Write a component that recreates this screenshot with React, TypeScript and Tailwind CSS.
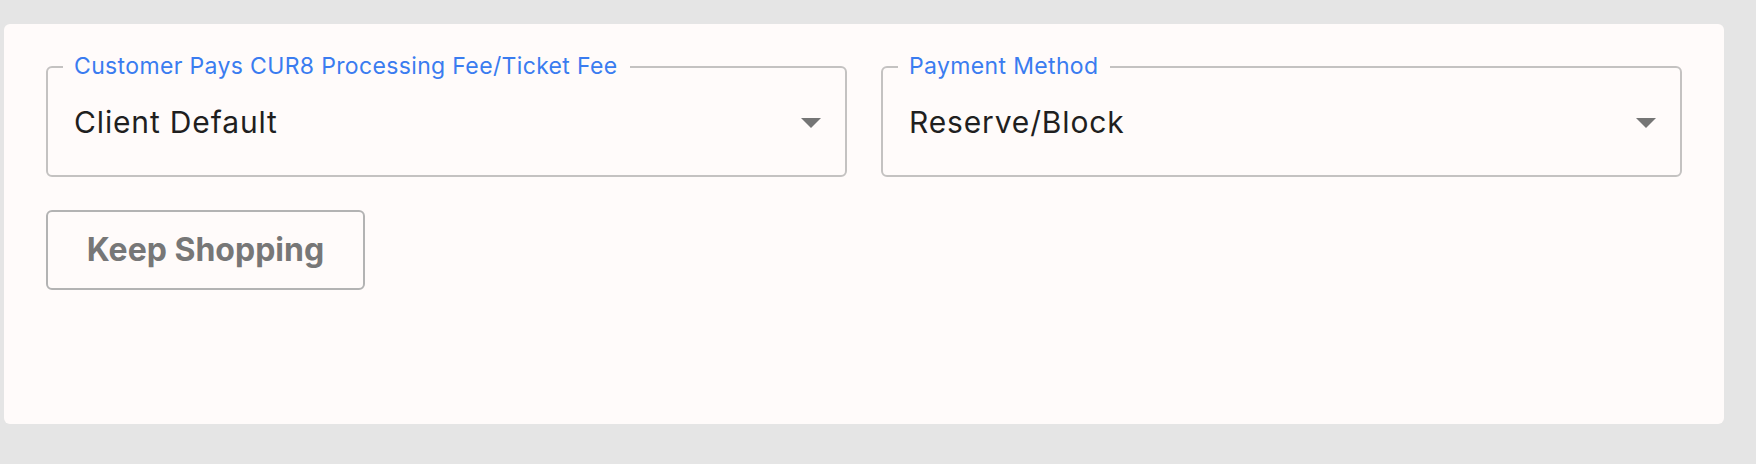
import React from "react";

function Caret() {
  return (
    <svg width="20" height="10" viewBox="0 0 20 10" className="shrink-0 mt-[3px]">
      <path d="M0 0 L20 0 L10 10 Z" fill="#757575" />
    </svg>
  );
}

function SelectField({ label, value }: { label: string; value: string }) {
  return (
    <div className="relative flex h-[111px] items-center justify-between rounded-[6px] border-2 border-[#c4c2c1] pl-[26px] pr-[24px]">
      <span className="absolute left-[15px] top-[-13px] bg-[#fffbfa] pl-[11px] pr-[12px] text-[23px] leading-[22px] tracking-[0.35px] text-[#3a7cf0]">
        {label}
      </span>
      <span className="text-[30px] leading-none tracking-[0.85px] text-[#1f1f1f]">{value}</span>
      <Caret />
    </div>
  );
}

export default function App() {
  return (
    <div
      className="h-[464px] w-[1756px] bg-[#e5e5e5] pl-[4px] pt-[24px]"
      style={{ fontFamily: "Inter, 'Noto Sans', sans-serif" }}
    >
      <div className="h-[400px] w-[1720px] rounded-[6px] bg-[#fffbfa] px-[42px] pt-[42px]">
        <div className="grid grid-cols-2 gap-[34px]">
          <SelectField label="Customer Pays CUR8 Processing Fee/Ticket Fee" value="Client Default" />
          <SelectField label="Payment Method" value="Reserve/Block" />
        </div>
        <button className="mt-[33px] flex h-[80px] w-[319px] items-center justify-center rounded-[6px] border-2 border-[#b3b3b3] text-[32px] font-bold text-[#777777]">
          Keep Shopping
        </button>
      </div>
    </div>
  );
}
